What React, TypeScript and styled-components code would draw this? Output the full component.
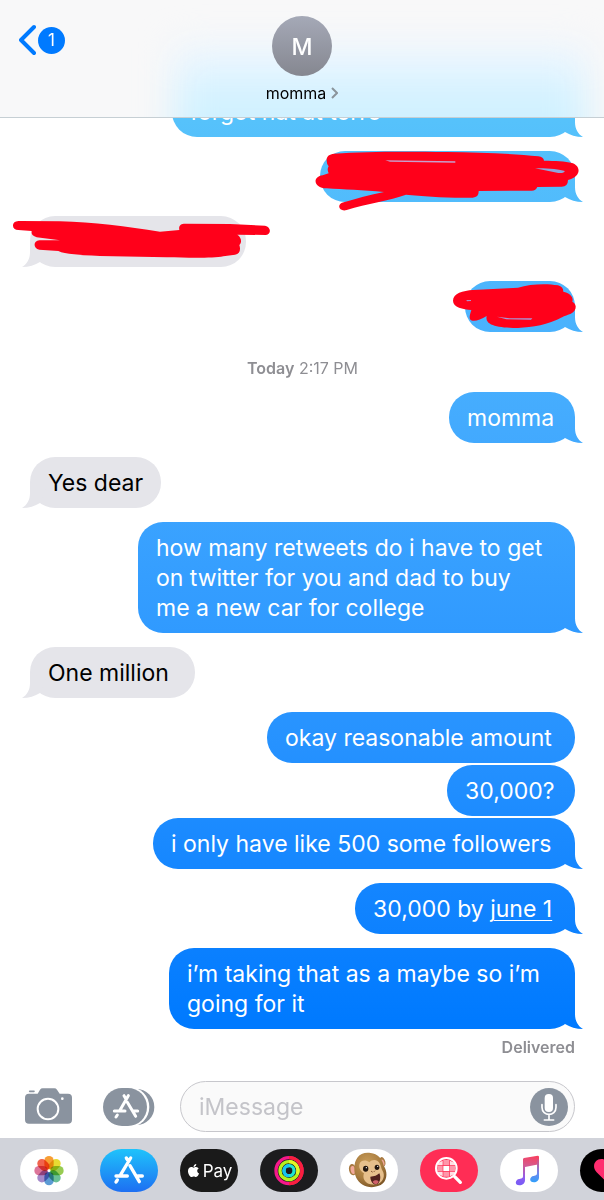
import React from "react";
import styled, { createGlobalStyle, css } from "styled-components";
import { FaApple } from "react-icons/fa";

const GlobalStyle = createGlobalStyle`
  *, *::before, *::after { box-sizing: border-box; }
  body {
    margin: 0;
    background: #fff;
    font-family: Inter, "Liberation Sans", sans-serif;
    -webkit-font-smoothing: antialiased;
  }
  button { font: inherit; border: 0; padding: 0; background: none; cursor: pointer; }
`;

const blueFade =
  "linear-gradient(180deg, #5cc8fb 0%, #56c2fb 10%, #44abfe 35%, #359eff 48%, #2692ff 62%, #1083ff 76%, #007aff 85%)";

const Screen = styled.div`
  display: flex;
  flex-direction: column;
  height: 100vh;
  overflow: hidden;
`;

const Header = styled.header`
  position: relative;
  display: grid;
  grid-template-columns: 1fr auto 1fr;
  align-items: start;
  flex: none;
  height: 118px;
  padding: 16px 19px 0;
  overflow: hidden;
  background: #f8f8f9;
  border-bottom: 1px solid #c6cfd4;

  &::before {
    content: "";
    position: absolute;
    inset: 48px 3% -50px 29%;
    background: linear-gradient(#edf6ff, #cff1ff 50%);
    filter: blur(18px);
  }
  > * { position: relative; z-index: 1; }
`;

const BackButton = styled.button`
  display: flex;
  align-items: center;
  justify-self: start;
  gap: 2px;
  margin-top: 8px;
  color: #007aff;
`;

const UnreadBadge = styled.span`
  width: 27px;
  height: 27px;
  border-radius: 50%;
  background: #007aff;
  color: #fff;
  font-size: 17px;
  line-height: 27px;
  text-align: center;
`;

const Contact = styled.button`
  display: flex;
  flex-direction: column;
  align-items: center;
  gap: 8px;
  color: #000;
`;

const Avatar = styled.span`
  width: 60px;
  height: 60px;
  border-radius: 50%;
  background: linear-gradient(#a5a9b7, #858790);
  color: #fff;
  font-size: 23px;
  font-weight: 500;
  line-height: 62px;
  text-align: center;
`;

const ContactName = styled.span`
  display: flex;
  align-items: center;
  gap: 5px;
  font-size: 16px;
  line-height: 18px;
`;

const Thread = styled.main`
  display: flex;
  flex: 1;
  flex-direction: column;
  justify-content: flex-end;
  min-height: 0;
  padding: 0 29px 13px 30px;
  overflow: hidden;
`;

const Timestamp = styled.p`
  margin: 26px 0 0;
  color: #8e8e93;
  font-size: 16px;
  line-height: 20px;
  text-align: center;
  b { font-weight: 600; }
`;

const Receipt = styled.p`
  margin: 8px 0 0;
  color: #8e8e93;
  font-size: 16px;
  font-weight: 600;
  line-height: 20px;
  text-align: right;
`;

type Side = "me" | "them";

const tail = css<{ $from: Side }>`
  &::after {
    content: "";
    position: absolute;
    bottom: 0;
    width: 25px;
    height: 26px;
    background: inherit;
    ${(p) =>
      p.$from === "me"
        ? css`
            right: -8px;
            clip-path: path("M17 0V11C17 18 20 23 25 26C18 26 12 24 7 21L0 8Z");
          `
        : css`
            left: -8px;
            clip-path: path("M8 0V11C8 18 5 23 0 26C7 26 13 24 18 21L25 8Z");
          `}
  }
`;

const Bubble = styled.div<{ $from: Side; $tail?: boolean; $joined?: boolean; $width?: number }>`
  position: relative;
  flex: none;
  align-self: ${(p) => (p.$from === "me" ? "flex-end" : "flex-start")};
  width: ${(p) => (p.$width ? `${p.$width}px` : "auto")};
  max-width: 82%;
  min-height: 51px;
  margin-top: ${(p) => (p.$joined ? "2px" : "14px")};
  padding: 11px 18px 10px;
  border-radius: 25px;
  background: ${(p) => (p.$from === "me" ? `${blueFade} fixed` : "#e5e5ea")};
  color: ${(p) => (p.$from === "me" ? "#fff" : "#000")};
  font-size: 23px;
  line-height: 30px;
  white-space: break-spaces;
  ${(p) => p.$tail && tail}

  a { color: inherit; text-decoration-thickness: 1px; text-underline-offset: 3px; }
`;

const Scribble = styled.svg<{ $left: number; $top: number }>`
  position: absolute;
  z-index: 1;
  left: ${(p) => p.$left}px;
  top: ${(p) => p.$top}px;
  fill: #ff001a;
`;

const Composer = styled.form`
  display: flex;
  align-items: center;
  flex: none;
  padding: 11px 29px 6px 25px;
`;

const ToolButton = styled.button<{ $gap: number }>`
  display: flex;
  flex: none;
  margin-right: ${(p) => p.$gap}px;
`;

const MessageField = styled.div`
  display: flex;
  align-items: center;
  flex: 1;
  min-width: 0;
  height: 51px;
  padding: 0 6px 0 18px;
  border: 1px solid #c7c7cc;
  border-radius: 26px;
  background: #fafafa;

  input {
    flex: 1;
    min-width: 0;
    padding: 0;
    border: 0;
    outline: 0;
    background: none;
    font: inherit;
    font-size: 23px;
    line-height: 30px;
  }
  input::placeholder { color: #c4c4c9; opacity: 1; }
`;

const MicButton = styled.button`
  display: flex;
  flex: none;
`;

const AppDrawer = styled.nav`
  display: flex;
  flex: none;
  gap: 22px;
  padding: 11px 0 8px 20px;
  overflow: hidden;
  background: #d1d3da;
`;

const AppPill = styled.button<{ $bg: string }>`
  display: flex;
  align-items: center;
  justify-content: center;
  flex: none;
  width: 58px;
  height: 43px;
  border-radius: 22px;
  background: ${(p) => p.$bg};
  overflow: hidden;
`;

const PayLabel = styled.span`
  display: flex;
  align-items: center;
  gap: 2px;
  color: #fff;
  font-size: 17px;
  line-height: 22px;
`;

const petals = ["#f7931e", "#e6d81b", "#8cc63f", "#58b98b", "#4a90d0", "#9b7cc4", "#d9668f", "#f0523a"];

const PhotosIcon = () => (
  <svg width="58" height="43" viewBox="0 0 174 129">
    {petals.map((fill, i) => (
      <rect
        key={fill}
        x="73"
        y="21"
        width="28"
        height="40"
        rx="14"
        fill={fill}
        opacity="0.9"
        style={{ mixBlendMode: "multiply" }}
        transform={`rotate(${i * 45} 87 65)`}
      />
    ))}
  </svg>
);

const AppStoreIcon = () => (
  <svg width="58" height="43" viewBox="0 0 174 129" fill="none" stroke="#fff" strokeWidth="10" strokeLinecap="round">
    <path d="M92 27L62 77M79 27L86 38M48 81H82M52 93L48 99M90 50L118 98M113 81H127" />
  </svg>
);

const RingsIcon = () => (
  <svg width="58" height="43" viewBox="0 0 174 129" fill="none" strokeWidth="10">
    <circle cx="87" cy="65" r="39" stroke="#f6188b" />
    <path d="M87 26A39 39 0 0 1 87 104" stroke="#fa1f3d" />
    <circle cx="87" cy="65" r="27" stroke="#b6f01c" />
    <path d="M87 38A27 27 0 0 1 112 75" stroke="#e3f527" />
    <circle cx="87" cy="65" r="15" stroke="#1fe3cf" />
    <path d="M87 50A15 15 0 0 0 87 80" stroke="#19c4ee" />
  </svg>
);

const MonkeyIcon = () => (
  <svg width="58" height="43" viewBox="0 0 174 129">
    <defs>
      <radialGradient id="fur" cx="0.4" cy="0.3" r="0.75">
        <stop offset="0" stopColor="#c99d5a" />
        <stop offset="0.6" stopColor="#a87c3f" />
        <stop offset="1" stopColor="#7d5626" />
      </radialGradient>
    </defs>
    <ellipse cx="38" cy="62" rx="11" ry="17" fill="#a87a42" transform="rotate(-12 38 62)" />
    <ellipse cx="39" cy="63" rx="7" ry="12" fill="#f2a99a" transform="rotate(-12 39 63)" />
    <ellipse cx="127" cy="39" rx="9" ry="15" fill="#a87a42" transform="rotate(-15 127 39)" />
    <ellipse cx="128" cy="41" rx="5" ry="10" fill="#f2a99a" transform="rotate(-15 128 41)" />
    <path d="M52 26C60 14 76 9 92 12C112 14 128 30 131 50C142 66 143 88 129 103C114 117 84 118 68 107C50 96 42 76 43 56C43 44 46 34 52 26Z" fill="url(#fur)" />
    <path d="M58 47C60 34 77 31 88 40C97 29 114 31 120 45C124 54 124 60 128 66C136 80 130 98 115 104C98 110 80 106 73 93C69 86 70 79 72 73C62 66 56 57 58 47Z" fill="#e6bf8c" />
    <ellipse cx="77" cy="59" rx="8" ry="9" fill="#21150f" />
    <ellipse cx="111" cy="55" rx="7" ry="8" fill="#21150f" />
    <circle cx="79" cy="56" r="2" fill="#fff" />
    <circle cx="113" cy="52" r="2" fill="#fff" />
    <path d="M94 67L97 69M102 68L104 66" stroke="#8b5b38" strokeWidth="3" strokeLinecap="round" />
    <path d="M91 83C102 83 112 79 118 73C123 82 122 101 111 106C100 109 91 97 91 83Z" fill="#51201d" />
    <path d="M98 98C104 92 113 93 116 98C112 108 102 107 98 98Z" fill="#d0616a" />
  </svg>
);

const ImageSearchIcon = () => (
  <svg width="58" height="43" viewBox="0 0 174 129" fill="none" stroke="#fff" strokeLinecap="round">
    <circle cx="79" cy="58" r="31" strokeWidth="6" />
    <g fill="#fff" stroke="none">
      <path d="M70 51H88V66H70Z" />
      <path d="M55 41L68 35V49H52ZM90 35L103 41L106 49H90ZM52 68H68V82L56 76ZM90 68H106L102 76L90 82Z" opacity="0.85" />
      <path d="M70 33H88V49H70ZM52 51H68V66H52ZM90 51H106V66H90ZM70 68H88V83H70Z" opacity="0.5" />
    </g>
    <path d="M104 83L121 100" strokeWidth="10" />
  </svg>
);

const MusicIcon = () => (
  <svg width="58" height="43" viewBox="0 0 174 129">
    <defs>
      <linearGradient id="note" gradientUnits="userSpaceOnUse" x1="98" y1="20" x2="82" y2="108">
        <stop offset="0" stopColor="#f8405f" />
        <stop offset="0.35" stopColor="#d55a8e" />
        <stop offset="0.8" stopColor="#8b5cf2" />
        <stop offset="1" stopColor="#7a5cf5" />
      </linearGradient>
      <linearGradient id="stem" x1="0" y1="0" x2="0" y2="1">
        <stop offset="0" stopColor="#e04b78" />
        <stop offset="0.6" stopColor="#6f86ee" />
        <stop offset="1" stopColor="#2fa0fb" />
      </linearGradient>
    </defs>
    <path d="M69 31Q69 28 72 27L113 20Q117 20 117 24V46L75 54V93C75 103 67 109 58 109C43 109 45 91 58 90L66 88Q69 87 69 82Z" fill="url(#note)" />
    <path d="M111 30H117V85C117 95 110 100 102 100C86 100 88 82 101 81L108 79Q111 78 111 73Z" fill="url(#stem)" />
  </svg>
);

const HeartIcon = () => (
  <svg width="58" height="43" viewBox="0 0 174 129">
    <path d="M87 106L50 70C28 46 56 14 87 40C118 14 146 46 124 70Z" fill="#ff2d6f" />
  </svg>
);

const CameraIcon = () => (
  <svg width="47" height="37" viewBox="0 0 141 111">
    <path d="M12 17Q0 17 0 29V95Q0 107 12 107H129Q141 107 141 95V29Q141 17 129 17H104L96 5Q93 1 88 1H53Q48 1 45 5L38 17Z" fill="#8a939f" />
    <path d="M14 10H27" stroke="#8a939f" strokeWidth="5" strokeLinecap="round" />
    <circle cx="69" cy="63" r="31" fill="none" stroke="#fff" strokeWidth="6" />
    <circle cx="112" cy="32" r="4" fill="#fff" />
  </svg>
);

const DrawerIcon = () => (
  <svg width="52" height="38" viewBox="0 0 156 114" fill="none" strokeLinecap="round">
    <rect x="20" y="3" width="134" height="108" rx="54" fill="#8a939f" />
    <rect x="-2" y="-3" width="141" height="120" rx="60" fill="#fff" />
    <rect x="0" y="0" width="132" height="114" rx="57" fill="#8a939f" />
    <path d="M76 23L50 68M63 23L69 33M34 69H66M43 81L39 87M73 43L98 85M92 69H104" stroke="#fff" strokeWidth="9" />
  </svg>
);

const MicIcon = () => (
  <svg width="38" height="38" viewBox="0 0 114 114" fill="none" stroke="#fff" strokeWidth="5" strokeLinecap="round">
    <circle cx="57" cy="57" r="57" fill="#8a939f" stroke="none" />
    <rect x="44" y="18" width="25" height="54" rx="12" fill="#fff" stroke="none" />
    <path d="M36 50V58C36 86 78 86 78 58V50M57 80V95M43 96H71" />
  </svg>
);

export default function App() {
  return (
    <>
      <GlobalStyle />
      <Screen>
        <Header>
          <BackButton aria-label="Back, 1 unread">
            <svg width="17" height="32" viewBox="0 0 17 32" fill="none" stroke="currentColor" strokeWidth="4" strokeLinecap="round" strokeLinejoin="round">
              <path d="M15 3L2 16L15 29" />
            </svg>
            <UnreadBadge>1</UnreadBadge>
          </BackButton>
          <Contact>
            <Avatar>M</Avatar>
            <ContactName>
              momma
              <svg width="7" height="12" viewBox="0 0 7 12" fill="none" stroke="#8b949b" strokeWidth="2">
                <path d="M1 1L6 6L1 11" />
              </svg>
            </ContactName>
          </Contact>
        </Header>

        <Thread>
          <Bubble $from="me" $tail $width={403}>forgot hat at torro</Bubble>
          <Bubble $from="me" $tail $width={255}>
            <Scribble $left={-10} $top={-5} width="275" height="69" viewBox="450 168 825 207" aria-hidden="true">
              <path d="M500 212C499 198 508 193 522 191C630 183 760 185 860 186C960 187 1060 191 1135 199Q1151 201 1152 212C1185 212 1216 214 1236 219C1264 228 1264 260 1224 270Q1224 290 1205 290L1132 291Q1128 302 1115 302L956 303Q957 322 938 323C860 325 790 318 738 314C690 332 620 340 560 360C540 366 529 347 546 338C590 326 630 314 672 306C610 300 550 299 500 295C460 294 456 260 488 256L506 250Q500 238 506 229Q500 222 500 212Z" />
              <path d="M676 211L886 214V218L690 215Z" fill="#c79fce" />
              <path d="M1125 235C1160 234 1200 238 1214 243C1214 248 1206 250 1195 249Z" fill="#8fa5dc" />
            </Scribble>
          </Bubble>
          <Bubble $from="them" $tail $width={216}>
            <Scribble $left={-20} $top={-4} width="270" height="50" viewBox="30 36 810 150" aria-hidden="true">
              <path d="M39 77C39 66 48 63 60 63L180 64C280 66 380 80 480 95L505 93L538 90C535 76 543 71 555 71L690 72L795 77C814 80 814 103 798 105L712 104C725 112 726 128 718 135C723 150 719 162 705 164L670 169C640 175 570 174 500 172L300 168C240 165 195 163 175 153L118 149C98 145 100 122 118 121L180 121L110 112C98 108 93 103 95 93L55 90C45 89 39 85 39 77Z" />
            </Scribble>
          </Bubble>
          <Bubble $from="me" $tail $width={110}>
            <Scribble $left={-15} $top={-4} width="130" height="55" viewBox="61 21 390 165" aria-hidden="true">
              <path d="M70 92C70 70 100 62 130 60L265 53C300 42 350 40 385 46Q401 50 401 65C425 70 432 85 428 95C445 103 441 128 415 134C400 140 395 142 380 150C340 168 290 174 250 174C200 172 165 165 171 138C150 150 130 158 121 148C118 140 122 130 125 120C100 118 70 112 70 92Z" />
              <path d="M202 140L240 145L308 145L304 149L230 148Z" fill="#a798d8" />
              <path d="M110 90H124V93L112 94Z" fill="#b08fcb" />
            </Scribble>
          </Bubble>

          <Timestamp>
            <b>Today</b> 2:17 PM
          </Timestamp>

          <Bubble $from="me" $tail $width={126}>momma</Bubble>
          <Bubble $from="them" $tail>Yes dear</Bubble>
          <Bubble $from="me" $tail $width={437}>{"how many retweets do i have to get \non twitter for you and dad to buy \nme a new car for college"}</Bubble>
          <Bubble $from="them" $tail $width={165}>One million</Bubble>
          <Bubble $from="me" $width={308}>okay reasonable amount</Bubble>
          <Bubble $from="me" $joined $width={128}>30,000?</Bubble>
          <Bubble $from="me" $tail $joined $width={422}>i only have like 500 some followers</Bubble>
          <Bubble $from="me" $tail $width={220}>30,000 by <a href="#june-1">june 1</a></Bubble>
          <Bubble $from="me" $tail $width={406}>{"i’m taking that as a maybe so i’m \ngoing for it"}</Bubble>
          <Receipt>Delivered</Receipt>
        </Thread>

        <Composer onSubmit={(e) => e.preventDefault()}>
          <ToolButton type="button" $gap={31} aria-label="Camera"><CameraIcon /></ToolButton>
          <ToolButton type="button" $gap={25} aria-label="Apps"><DrawerIcon /></ToolButton>
          <MessageField>
            <input type="text" placeholder="iMessage" aria-label="iMessage" />
            <MicButton type="button" aria-label="Record audio"><MicIcon /></MicButton>
          </MessageField>
        </Composer>

        <AppDrawer aria-label="iMessage apps">
          <AppPill $bg="#fff" aria-label="Photos"><PhotosIcon /></AppPill>
          <AppPill $bg="linear-gradient(#1fc3fb, #1d6ff2)" aria-label="App Store"><AppStoreIcon /></AppPill>
          <AppPill $bg="#1a1a1a" aria-label="Apple Pay">
            <PayLabel><FaApple size={15} />Pay</PayLabel>
          </AppPill>
          <AppPill $bg="#1c1c1e" aria-label="Activity"><RingsIcon /></AppPill>
          <AppPill $bg="#fff" aria-label="Animoji"><MonkeyIcon /></AppPill>
          <AppPill $bg="#ff2d55" aria-label="Images"><ImageSearchIcon /></AppPill>
          <AppPill $bg="#fff" aria-label="Music"><MusicIcon /></AppPill>
          <AppPill $bg="#000" aria-label="Digital Touch"><HeartIcon /></AppPill>
        </AppDrawer>
      </Screen>
    </>
  );
}
